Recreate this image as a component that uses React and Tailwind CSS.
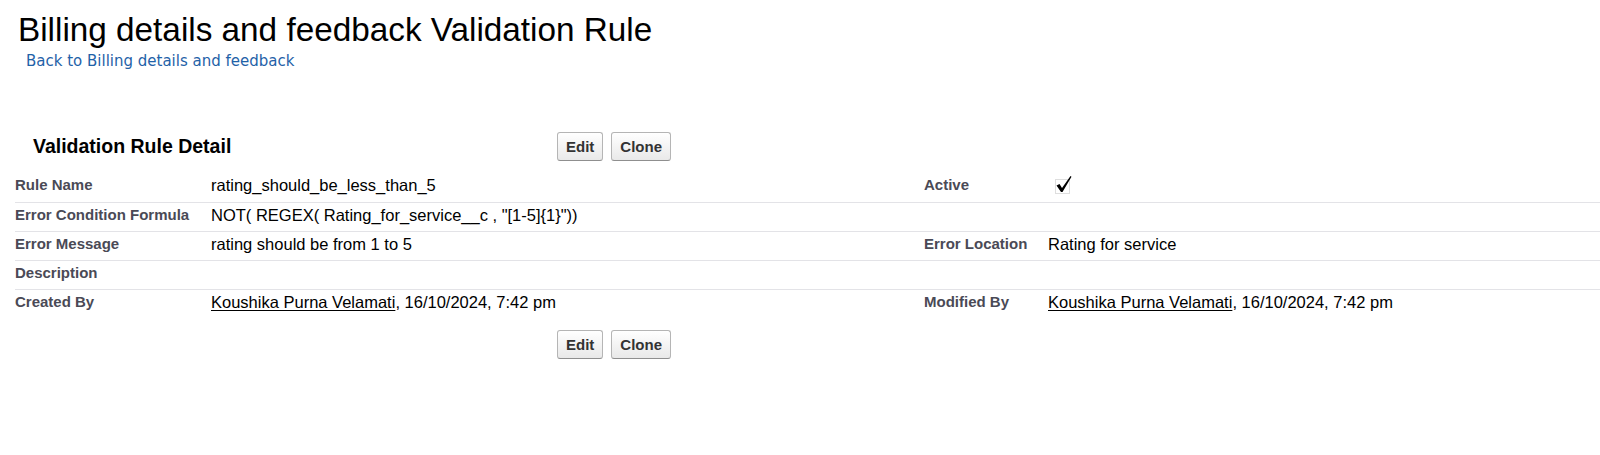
import React from "react";

function Btn({ children }) {
  return (
    <button className="h-[29px] px-[8px] rounded-[3px] border border-[#b5b5b5] border-b-[#8f8f8f] bg-gradient-to-b from-[#ffffff] to-[#e9e9e9] text-[15px] font-bold text-[#333333] leading-none [font-family:'Liberation_Sans',Arial,sans-serif]">
      {children}
    </button>
  );
}

function Buttons() {
  return (
    <div className="flex gap-[8px]">
      <Btn>Edit</Btn>
      <Btn>Clone</Btn>
    </div>
  );
}

function Check() {
  return (
    <svg width="22" height="22" viewBox="0 0 22 22" className="ml-[5px] -mt-[2px]">
      <rect x="2.5" y="6.5" width="14" height="14" fill="none" stroke="#bdbdbd" strokeWidth="1" strokeDasharray="1 1" />
      <path d="M3.5 12.5 L6.5 11 L9 15 L17.5 3 L18.5 3.8 L9.5 19 L8 19 Z" fill="#000" />
    </svg>
  );
}

function User() {
  return (
    <span>
      <span className="underline underline-offset-[2px]">Koushika Purna Velamati</span>, 16/10/2024, 7:42 pm
    </span>
  );
}

function Row({ l1, v1, l2, v2, last }) {
  return (
    <div
      className={
        "grid grid-cols-[196px_713px_124px_1fr] items-center pt-[3px] pb-[7px] " +
        (last ? "" : "border-b border-[#e3e3e7]")
      }
    >
      <div className="text-[15px] font-bold text-[#4a4a56] leading-[18px]">{l1}</div>
      <div className="text-[16.5px] text-black leading-[18px] flex items-center min-h-[18px]">{v1}</div>
      <div className="text-[15px] font-bold text-[#4a4a56] leading-[18px]">{l2}</div>
      <div className="text-[16.5px] text-black leading-[18px] flex items-center min-h-[18px]">{v2}</div>
    </div>
  );
}

export default function App() {
  return (
    <div className="w-full h-[455px] bg-white [font-family:'Liberation_Sans',Arial,sans-serif] overflow-hidden">
      <h1 className="pt-[13px] pl-[18px] text-[33.3px] leading-[33px] text-black font-normal">
        Billing details and feedback Validation Rule
      </h1>
      <div className="mt-[6px] pl-[26px] leading-[18px]">
        <a className="text-[15px] text-[#1f62a8] [font-family:'DejaVu_Sans',Verdana,sans-serif] cursor-pointer">
          Back to Billing details and feedback
        </a>
      </div>

      <div className="mt-[62px] flex items-center h-[29px]">
        <div className="w-[557px] pl-[33px]">
          <h2 className="text-[19.5px] font-bold text-black leading-none">Validation Rule Detail</h2>
        </div>
        <Buttons />
      </div>

      <div className="ml-[15px] mt-[11px]">
        <Row l1="Rule Name" v1="rating_should_be_less_than_5" l2="Active" v2={<Check />} />
        <Row
          l1="Error Condition Formula"
          v1={'NOT( REGEX( Rating_for_service__c , "[1-5]{1}"))'}
          l2=""
          v2=""
        />
        <Row l1="Error Message" v1="rating should be from 1 to 5" l2="Error Location" v2="Rating for service" />
        <Row l1="Description" v1="" l2="" v2="" />
        <Row l1="Created By" v1={<User />} l2="Modified By" v2={<User />} last />
      </div>

      <div className="mt-[12px] pl-[557px]">
        <Buttons />
      </div>
    </div>
  );
}
